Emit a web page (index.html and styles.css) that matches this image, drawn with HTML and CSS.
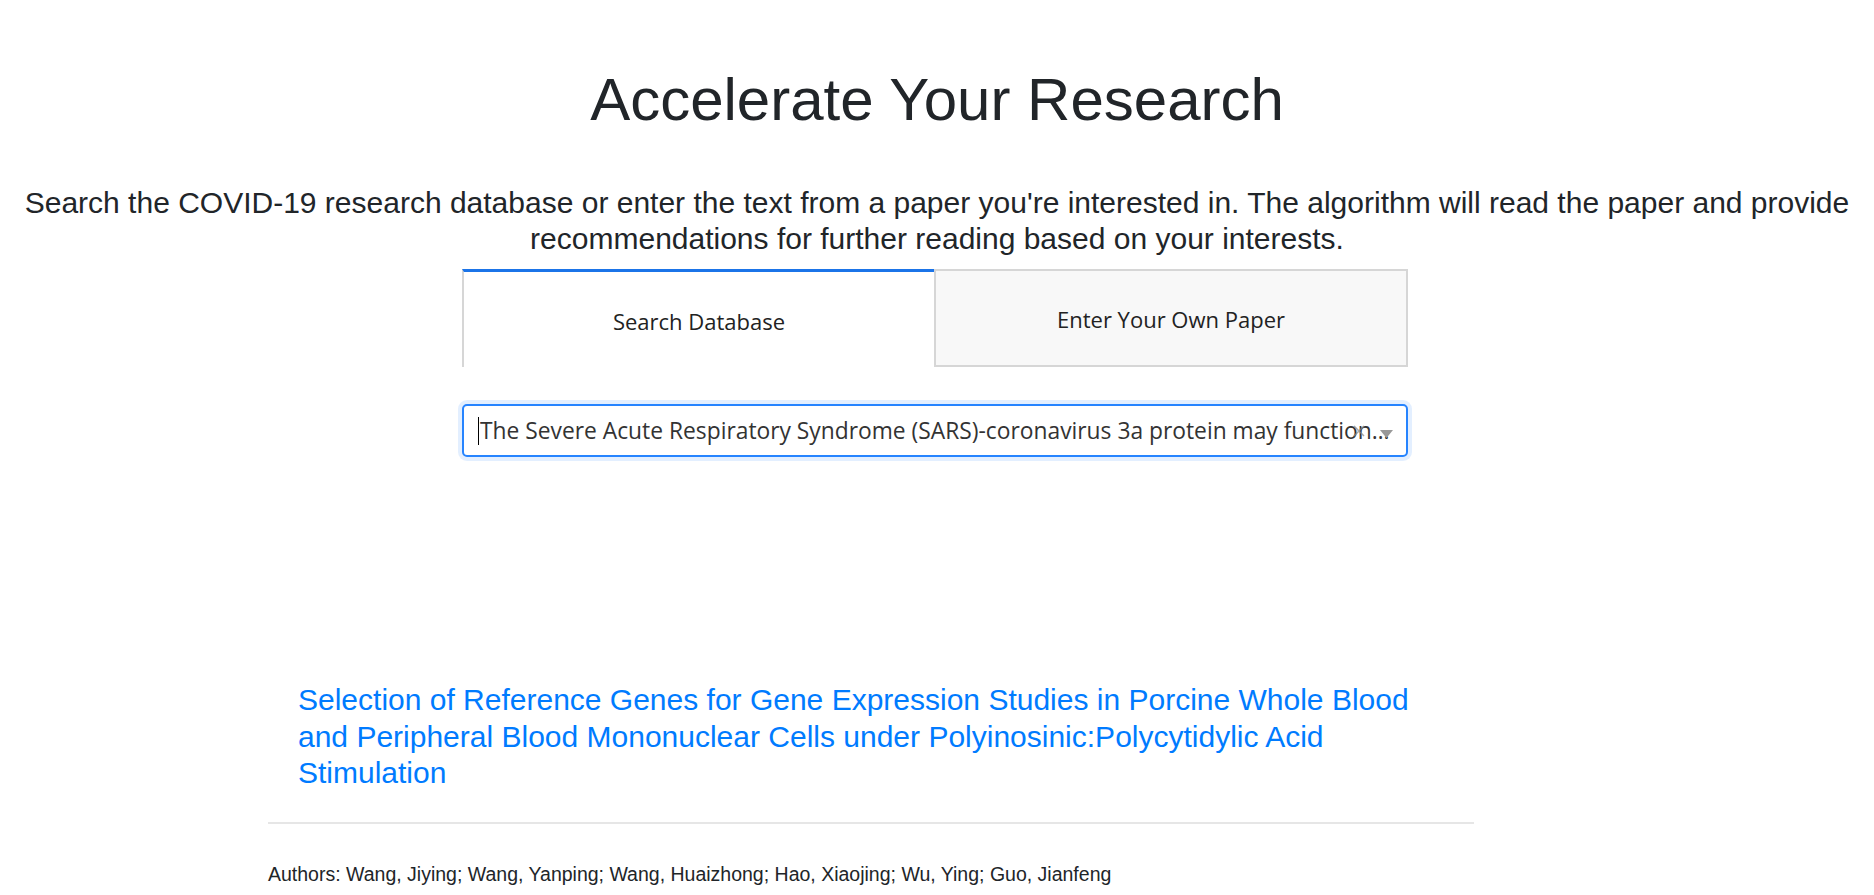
FILE: index.html
```html
<!DOCTYPE html>
<html lang="en">
<head>
<meta charset="utf-8">
<title>Accelerate Your Research</title>
<link rel="stylesheet" href="styles.css">
</head>
<body>
<main class="page">
  <header class="intro">
    <h1 class="title">Accelerate Your Research</h1>
    <p class="lead">Search the COVID-19 research database or enter the text from a paper you're interested in. The algorithm will read the paper and provide recommendations for further reading based on your interests.</p>
  </header>

  <section class="search">
    <div class="tabs">
      <div class="tab tab-active">Search Database</div>
      <div class="tab tab-idle">Enter Your Own Paper</div>
    </div>

    <div class="select">
      <div class="select-value"><span class="caret"></span>The Severe Acute Respiratory Syndrome (SARS)-coronavirus 3a protein may function…</div>
      <svg class="clear" width="12" height="12" viewBox="0 0 12 12"><path d="M1 1 L11 11 M11 1 L1 11" stroke="#8a8a8a" stroke-width="1.5" fill="none" opacity="0.75"/></svg>
      <svg class="arrow" width="13" height="8" viewBox="0 0 13 8"><path d="M0 0 H13 L6.5 8 Z" fill="#999"/></svg>
    </div>
  </section>

  <section class="results">
    <article class="result">
      <a class="result-title" href="#">Selection of Reference Genes for Gene Expression Studies in Porcine Whole Blood and Peripheral Blood Mononuclear Cells under Polyinosinic:Polycytidylic Acid Stimulation</a>
      <hr class="rule">
      <p class="authors">Authors: Wang, Jiying; Wang, Yanping; Wang, Huaizhong; Hao, Xiaojing; Wu, Ying; Guo, Jianfeng</p>
    </article>
  </section>
</main>
</body>
</html>
```

FILE: styles.css
```css
html, body {
  margin: 0;
  padding: 0;
}

body {
  font-family: "Liberation Sans", Arial, sans-serif;
  color: #212529;
  background: #fff;
}

.page {
  display: flex;
  flex-direction: column;
}

.intro {
  text-align: center;
  padding: 0 10px;
}

.title {
  margin: 64px 0 0;
  font-size: 60px;
  font-weight: 400;
  line-height: 72px;
}

.lead {
  margin: 49px 0 0;
  font-size: 30px;
  line-height: 36px;
}

.search {
  width: 946px;
  margin: 12px 0 0 calc(50% - 475px);
  display: flex;
  flex-direction: column;
}

.tabs {
  display: flex;
  height: 98px;
}

.tab {
  flex: 1;
  display: flex;
  align-items: center;
  justify-content: center;
  padding-top: 2px;
  font-family: "Open Sans", "Noto Sans", sans-serif;
  font-size: 22px;
  color: #222;
  box-sizing: border-box;
}

.tab-active {
  background: #fff;
  border-top: 3px solid #1b74e8;
  border-left: 2px solid #d6d6d6;
}

.tab-idle {
  background: #f8f8f8;
  border: 2px solid #d6d6d6;
}

.select {
  margin-top: 37px;
  height: 53px;
  box-sizing: border-box;
  border: 2px solid #2684ff;
  border-radius: 5px;
  box-shadow: 0 0 0 4px rgba(38, 132, 255, 0.13);
  display: flex;
  align-items: center;
  position: relative;
  background: #fff;
}

.select-value {
  flex: 1;
  min-width: 0;
  padding: 0 6px 0 14px;
  font-family: "Open Sans", "Noto Sans", sans-serif;
  font-size: 22.8px;
  color: #333;
  white-space: nowrap;
  overflow: hidden;
  text-overflow: ellipsis;
}

.caret {
  display: inline-block;
  width: 1px;
  height: 28px;
  background: #000;
  vertical-align: -6px;
  margin-right: 1px;
}

.clear {
  position: absolute;
  right: 41px;
  top: 19px;
}

.arrow {
  position: absolute;
  right: 13px;
  top: 24px;
}

.results {
  margin: 225px 0 0 268px;
  width: 1206px;
}

.result-title {
  display: block;
  padding: 0 30px;
  font-size: 30px;
  line-height: 36.6px;
  color: #007bff;
  text-decoration: none;
}

.rule {
  margin: 30px 0 0;
  border: 0;
  border-top: 2px solid #e6e6e6;
  height: 0;
}

.authors {
  margin: 35px 0 0;
  font-size: 19.5px;
  line-height: 30px;
  color: #212529;
}
```
